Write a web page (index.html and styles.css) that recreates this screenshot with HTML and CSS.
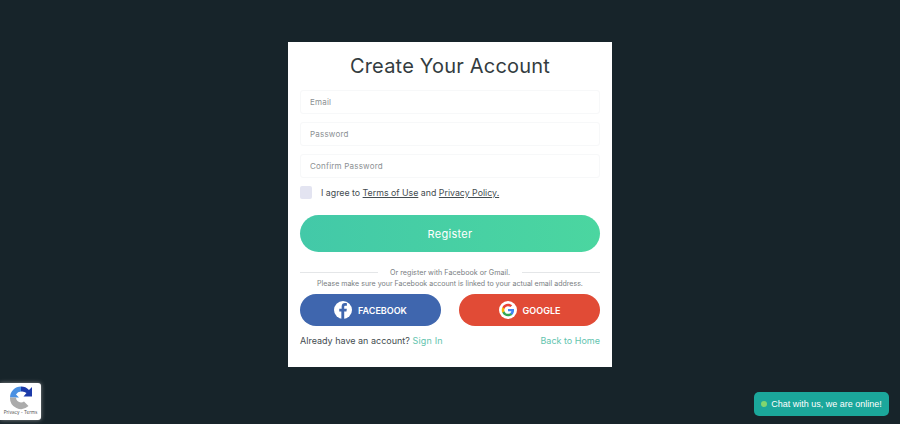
FILE: index.html
```html
<!DOCTYPE html>
<html lang="en">
<head>
    <meta charset="UTF-8">
    <meta name="viewport" content="width=device-width, initial-scale=1.0">
    <title>Create Your Account</title>
    <link rel="stylesheet" href="styles.css">
</head>
<body>
    <form class="card">
        <h1>Create Your Account</h1>
        <input class="field" type="text" placeholder="Email">
        <input class="field" type="password" placeholder="Password">
        <input class="field" type="password" placeholder="Confirm Password">

        <label class="agree">
            <span class="check"></span>
            <span>I agree to <a href="#">Terms of Use</a> and <a href="#">Privacy Policy.</a></span>
        </label>

        <button class="register" type="button">Register</button>

        <div class="divider"><span>Or register with Facebook or Gmail.</span></div>
        <p class="note">Please make sure your Facebook account is linked to your actual email address.</p>

        <div class="socials">
            <a class="social facebook" href="#">
                <svg class="social-icon" viewBox="0 0 24 24">
                    <circle cx="12" cy="12" r="12" fill="#fff"/>
                    <path d="M13.6 24v-10h3l.5-3.700h-3.500V8c0-1.100.3-1.800 1.800-1.800h1.800V3c-.4-.1-1.400-.2-2.600-.2-2.600 0-4.400 1.600-4.400 4.500v3H7v3.700h2.800V24z" fill="#3f66ae"/>
                </svg>
                FACEBOOK
            </a>
            <a class="social google" href="#">
                <svg class="social-icon" viewBox="0 0 24 24">
                    <circle cx="12" cy="12" r="12" fill="#fff"/>
                    <g transform="translate(3.6 3.6) scale(.7)">
                        <path d="M23.500 12.300c0-.8-.1-1.600-.2-2.300H12v4.500h6.500c-.3 1.500-1.100 2.700-2.400 3.600v3h3.900c2.200-2.100 3.500-5.100 3.500-8.800z" fill="#4285f4"/>
                        <path d="M12 24c3.200 0 6-1.100 8-2.900l-3.900-3c-1.100.7-2.500 1.200-4.100 1.200-3.100 0-5.800-2.100-6.700-5H1.300v3.100C3.300 21.300 7.300 24 12 24z" fill="#34a853"/>
                        <path d="M5.300 14.300c-.5-1.500-.5-3.100 0-4.600V6.600h-4c-1.700 3.300-1.700 7.500 0 10.800z" fill="#fbbc05"/>
                        <path d="M12 4.700c1.800 0 3.300.6 4.600 1.800l3.400-3.400C17.900 1.200 15.200 0 12 0 7.300 0 3.300 2.700 1.300 6.600l4 3.100c.9-2.900 3.600-5 6.700-5z" fill="#ea4335"/>
                    </g>
                </svg>
                GOOGLE
            </a>
        </div>

        <div class="bottom-links">
            <span>Already have an account? <a class="sign-in" href="#">Sign In</a></span>
            <a href="#">Back to Home</a>
        </div>
    </form>

    <div class="recaptcha">
        <svg class="recaptcha-icon" viewBox="0 0 24 24">
            <path d="M12 1a11 11 0 0 1 8 3.400L23 1.500V11h-8.500l3-3.500A7 7 0 0 0 12 6z" fill="#1c3aa9"/>
            <path d="M12 1v5a6 6 0 0 0-5 3l3 3H1V12A11 11 0 0 1 12 1z" fill="#4a90e2"/>
            <path d="M1 12h6a5 5 0 0 0 5 5 5 5 0 0 0 3-1l4.500 4.500A11 11 0 0 1 1 12z" fill="#ababab"/>
        </svg>
        <div class="recaptcha-links">Privacy - Terms</div>
    </div>

    <div class="chat"><span class="dot"></span>Chat with us, we are online!</div>
</body>
</html>
```
FILE: styles.css
```css
* {
    box-sizing: border-box;
}

body {
    font-family: 'Inter', 'Liberation Sans', sans-serif;
    background: #17242a;
    margin: 0;
    height: 424px;
    overflow: hidden;
    display: flex;
    justify-content: center;
    align-items: flex-start;
    padding-top: 42px;
}

a {
    color: inherit;
}

.card {
    background: #ffffff;
    width: 324px;
    height: 325px;
    padding: 0 12px;
    display: flex;
    flex-direction: column;
}

h1 {
    font-size: 20px;
    font-weight: 400;
    letter-spacing: 0.2px;
    line-height: 24px;
    color: #333c40;
    text-align: center;
    margin: 12px 0 12px;
}

.field {
    width: 100%;
    height: 24px;
    padding: 0 9px;
    margin-bottom: 8px;
    border: 1px solid #f7f8f9;
    border-radius: 3px;
    background: #ffffff;
    font-family: inherit;
    font-size: 8px;
    letter-spacing: 0.2px;
}

.field::placeholder {
    color: #8b9093;
}

.agree {
    display: flex;
    align-items: center;
    gap: 9px;
    height: 13px;
    font-size: 8.8px;
    color: #444c50;
}

.check {
    width: 12px;
    height: 13px;
    border-radius: 2px;
    background: #e3e4f1;
}

.register {
    height: 37px;
    margin-top: 16px;
    border: none;
    border-radius: 19px;
    background: linear-gradient(90deg, #43c9a8, #4bd6a0);
    color: #ffffff;
    font-family: inherit;
    font-size: 11px;
    letter-spacing: 0.3px;
}

.divider {
    display: flex;
    align-items: center;
    gap: 12px;
    margin-top: 15px;
    height: 10px;
    font-size: 7.2px;
    color: #7a8083;
    white-space: nowrap;
}

.divider::before,
.divider::after {
    content: "";
    flex: 1;
    height: 1px;
    background: #e4e6e8;
}

.note {
    margin: 2px 0 0;
    height: 10px;
    line-height: 10px;
    font-size: 7.05px;
    color: #7a8083;
    text-align: center;
    white-space: nowrap;
}

.socials {
    display: flex;
    justify-content: space-between;
    margin-top: 5px;
}

.social {
    width: 141px;
    height: 32px;
    border-radius: 16px;
    display: flex;
    align-items: center;
    justify-content: center;
    gap: 6px;
    color: #ffffff;
    font-size: 9px;
    font-weight: 600;
    text-decoration: none;
}

.facebook {
    background: #3f66ae;
}

.google {
    background: #e14b36;
}

.social-icon {
    width: 18px;
    height: 18px;
}

.bottom-links {
    display: flex;
    justify-content: space-between;
    align-items: center;
    margin-top: 8px;
    height: 13px;
    font-size: 9px;
    color: #444c50;
}

.bottom-links a {
    color: #62c4ae;
    text-decoration: none;
}

.sign-in {
    letter-spacing: 0.2px;
}

.recaptcha {
    position: absolute;
    left: 0;
    bottom: 4px;
    width: 41px;
    height: 37px;
    background: #ffffff;
    border-radius: 0 3px 3px 0;
    box-shadow: 0 0 4px rgba(160, 160, 160, 0.8);
    display: flex;
    flex-direction: column;
    align-items: center;
    padding-top: 2px;
}

.recaptcha-icon {
    width: 24px;
    height: 25px;
}

.recaptcha-links {
    font-size: 4.5px;
    color: #555;
    white-space: nowrap;
}

.chat {
    position: absolute;
    right: 11px;
    bottom: 8px;
    width: 135px;
    height: 24px;
    border-radius: 5px;
    background: #1ba79b;
    color: #ffffff;
    font-family: 'Liberation Sans', sans-serif;
    font-size: 9px;
    display: flex;
    align-items: center;
    justify-content: center;
    gap: 4px;
}

.dot {
    width: 6px;
    height: 6px;
    border-radius: 50%;
    background: #7fd66f;
}
```
